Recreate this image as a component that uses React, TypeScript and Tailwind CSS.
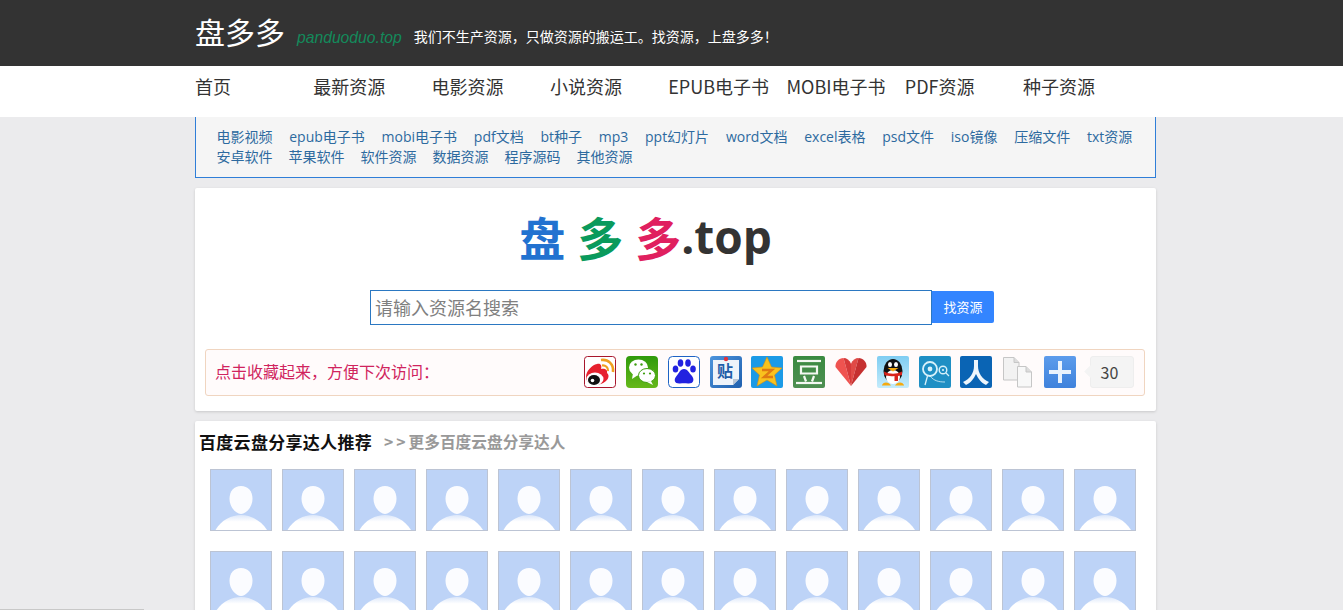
import React from "react";

const font = { fontFamily: '"Noto Sans CJK SC", sans-serif' };
const tagFont = { fontFamily: '"Open Sans", "Noto Sans CJK SC", sans-serif' };

const navItems = ["首页", "最新资源", "电影资源", "小说资源", "EPUB电子书", "MOBI电子书", "PDF资源", "种子资源"];

const tagRows = [
  {
    gap: "gap-[16.750px]",
    tags: ["电影视频", "epub电子书", "mobi电子书", "pdf文档", "bt种子", "mp3", "ppt幻灯片", "word文档", "excel表格", "psd文件", "iso镜像", "压缩文件", "txt资源"],
  },
  {
    gap: "gap-[16px]",
    tags: ["安卓软件", "苹果软件", "软件资源", "数据资源", "程序源码", "其他资源"],
  },
];

function Avatar() {
  return (
    <svg width="62" height="62" viewBox="0 0 60 60" className="block border border-[#bcc4d4] bg-[#bdd3f7]">
      <defs>
        <linearGradient id="shoulder" x1="0" y1="0" x2="0" y2="1">
          <stop offset="0" stopColor="#dce7fa" />
          <stop offset="0.45" stopColor="#ffffff" />
        </linearGradient>
      </defs>
      <path d="M30 16C37 16 41.500 21 41.500 29C41.500 37 35 44 30 44C25 44 18.500 37 18.500 29C18.500 21 23 16 30 16Z" fill="#fbfcff" />
      <path d="M4.500 60C10 50 21 45 30 45C39 45 50 50 56 60Z" fill="url(#shoulder)" />
    </svg>
  );
}

function ShareIcon({ children }: { children: React.ReactNode }) {
  return (
    <svg width="32" height="32" viewBox="0 0 32 32" className="block">
      {children}
    </svg>
  );
}

const shareIcons = [
  // weibo
  <ShareIcon key="weibo">
    <rect x="0.500" y="0.500" width="31" height="31" rx="3" fill="#fff" stroke="#a8162c" />
    <path d="M2 21C2 15 8 9 13 8C17 7 18 10 17 13C21 12 24 14 23 17C26 19 25 25 17 28C9 30 2 27 2 21Z" fill="#e6212e" />
    <ellipse cx="11" cy="23" rx="8.500" ry="6.500" fill="#fff" />
    <ellipse cx="10" cy="24" rx="6" ry="5" fill="#111" />
    <circle cx="8.500" cy="24.500" r="1.800" fill="#fff" />
    <path d="M17 4C24 3 30 8 29 16" fill="none" stroke="#f0a020" strokeWidth="2.600" />
    <path d="M18 9.500C21.500 9 24.500 11.500 24 15" fill="none" stroke="#f0a020" strokeWidth="2.200" />
  </ShareIcon>,
  // wechat
  <ShareIcon key="wechat">
    <defs>
      <linearGradient id="wx" x1="0" y1="0" x2="0" y2="1">
        <stop offset="0" stopColor="#2f9a0a" />
        <stop offset="1" stopColor="#66b81a" />
      </linearGradient>
    </defs>
    <rect width="32" height="32" rx="4" fill="url(#wx)" />
    <ellipse cx="12.500" cy="11.500" rx="9.500" ry="8" fill="#fff" />
    <path d="M7 17L6 23L12 19Z" fill="#fff" />
    <ellipse cx="21" cy="19.500" rx="8.500" ry="7" fill="#fff" stroke="#3f9f10" />
    <path d="M25 25L27 29L21 26Z" fill="#fff" />
    <circle cx="9.500" cy="8.500" r="1.200" fill="#3f9f10" />
    <circle cx="15.500" cy="8.500" r="1.200" fill="#3f9f10" />
    <circle cx="18" cy="17.500" r="1.100" fill="#3f9f10" />
    <circle cx="24" cy="17.500" r="1.100" fill="#3f9f10" />
  </ShareIcon>,
  // baidu
  <ShareIcon key="baidu">
    <rect x="0.500" y="0.500" width="31" height="31" rx="4" fill="#fff" stroke="#1e63c4" />
    <g fill="#2222e0">
      <ellipse cx="7.500" cy="13" rx="2.800" ry="3.600" />
      <ellipse cx="12.500" cy="7" rx="2.800" ry="3.800" />
      <ellipse cx="20" cy="7" rx="2.800" ry="3.800" />
      <ellipse cx="25" cy="13" rx="2.800" ry="3.600" />
      <path d="M16 13C20 13 21 17 24 20C27 24 25 28 20 27.500C17 27 15 27 12 27.500C7 28 5 24 8.500 20C11 17.500 12 13 16 13Z" />
    </g>
  </ShareIcon>,
  // tieba
  <ShareIcon key="tieba">
    <defs>
      <linearGradient id="tb" x1="0" y1="0" x2="1" y2="1">
        <stop offset="0" stopColor="#4d94dc" />
        <stop offset="1" stopColor="#1f5fae" />
      </linearGradient>
    </defs>
    <rect width="32" height="32" rx="3" fill="url(#tb)" />
    <path d="M3 4H29V23L23 29H3Z" fill="#eef3fa" />
    <path d="M29 23L23 29V23Z" fill="#b8c4d4" />
    <circle cx="16" cy="3" r="2.200" fill="#e0333c" />
    <text x="15" y="21" textAnchor="middle" fontSize="16" fontWeight="700" fill="#1f5da8" style={font}>贴</text>
  </ShareIcon>,
  // qzone
  <ShareIcon key="qzone">
    <rect width="32" height="32" rx="2" fill="#1c9ae6" />
    <path d="M16 1L20.500 11L31 12L23.500 19L26 30L16 24L6 30L8.500 19L1 12L11.500 11Z" fill="#f9c21e" stroke="#d98f12" strokeWidth="0.600" />
    <path d="M11 14H21L13 21H22" fill="none" stroke="#e07a12" strokeWidth="2.400" />
  </ShareIcon>,
  // douban
  <ShareIcon key="douban">
    <defs>
      <linearGradient id="db" x1="0" y1="0" x2="0" y2="1">
        <stop offset="0" stopColor="#3a8a40" />
        <stop offset="1" stopColor="#4f8f52" />
      </linearGradient>
    </defs>
    <rect width="32" height="32" rx="2" fill="url(#db)" />
    <g stroke="#f4f8f2" strokeWidth="2.200" fill="none">
      <path d="M4 5H28" />
      <path d="M8 10.500H24V17.500H8Z" />
      <path d="M11 20L13 25.500M21 20L19 25.500" />
      <path d="M3 27H29" />
    </g>
  </ShareIcon>,
  // heart
  <ShareIcon key="heart">
    <path d="M16 30L0.500 11C0 6 4 2 8.500 2Z" fill="#ef5350" />
    <path d="M8.500 2C11.500 2 14.500 4 16 7.500V30Z" fill="#d63a3a" />
    <path d="M23.500 2C20.500 2 17.500 4 16 7.500V30Z" fill="#e04a46" />
    <path d="M16 30L31.500 11C32 6 28 2 23.500 2Z" fill="#c53030" />
  </ShareIcon>,
  // qq
  <ShareIcon key="qq">
    <defs>
      <linearGradient id="qqbg" x1="0" y1="0" x2="0" y2="1">
        <stop offset="0" stopColor="#7fcdf2" />
        <stop offset="1" stopColor="#c4ebfb" />
      </linearGradient>
    </defs>
    <rect width="32" height="32" rx="2" fill="url(#qqbg)" />
    <ellipse cx="16" cy="15" rx="9.500" ry="12" fill="#111" />
    <ellipse cx="16" cy="21" rx="7" ry="7" fill="#fff" />
    <ellipse cx="13" cy="8.500" rx="2" ry="2.600" fill="#fff" />
    <ellipse cx="19" cy="8.500" rx="2" ry="2.600" fill="#fff" />
    <path d="M10.500 12H21.500L16 15.500Z" fill="#f5a90e" />
    <path d="M7 15.500C13 18.500 19 18.500 25 15.500L25 19L21 20V25H17.500V20C14 20.500 10 20 7.500 19Z" fill="#d9231c" />
    <path d="M5 29C7 25 12 26 14 29.500H5ZM27 29C25 25 20 26 18 29.500H27Z" fill="#f5a90e" />
  </ShareIcon>,
  // tencent pengyou
  <ShareIcon key="tqq">
    <rect width="32" height="32" rx="2" fill="#1f8fc4" />
    <circle cx="11" cy="13" r="7" fill="none" stroke="#d8f1fa" strokeWidth="1.800" />
    <circle cx="11" cy="13" r="2.400" fill="#d8f1fa" />
    <circle cx="24" cy="14" r="3.800" fill="none" stroke="#d8f1fa" strokeWidth="1.400" />
    <circle cx="24" cy="14" r="1.100" fill="#d8f1fa" />
    <path d="M8.500 20L6 29M27 17L30 20" stroke="#d8f1fa" strokeWidth="1.300" />
    <path d="M11 20C15 25 20 26 26 26" fill="none" stroke="#d8f1fa" strokeWidth="0.800" />
  </ShareIcon>,
  // renren
  <ShareIcon key="renren">
    <rect width="32" height="32" rx="2" fill="#0a64b4" />
    <path d="M14 4H18V10C18 17 22 23 29 26L26 29C21 27 18 22 16 18C14 22 11 27 6 29L3 26C10 23 14 17 14 10Z" fill="#eef6fc" />
  </ShareIcon>,
  // copy
  <ShareIcon key="copy">
    <path d="M1.500 1.500H12L17 6.500V24H1.500Z" fill="#f2f2f2" stroke="#c6c6c6" />
    <path d="M12 1.500V6.500H17" fill="#dcdcdc" stroke="#c6c6c6" />
    <path d="M15.500 10.500H24L29.500 16V31H15.500Z" fill="#f8f8f8" stroke="#c6c6c6" />
    <path d="M24 10.500V16H29.500" fill="#dcdcdc" stroke="#c6c6c6" />
  </ShareIcon>,
  // more
  <ShareIcon key="more">
    <defs>
      <linearGradient id="mo" x1="0" y1="0" x2="0" y2="1">
        <stop offset="0" stopColor="#5c9cec" />
        <stop offset="1" stopColor="#3f82dc" />
      </linearGradient>
    </defs>
    <rect width="32" height="32" rx="2" fill="url(#mo)" />
    <path d="M14 5H18V14H27V18H18V27H14V18H5V14H14Z" fill="#eaf3fd" />
  </ShareIcon>,
];

export default function App() {
  return (
    <div className="relative h-[610px] overflow-hidden bg-[#ebebed]" style={font}>
      {/* Header */}
      <header className="h-[66px] bg-[#333333]">
        <div className="ml-[195px] flex h-full w-[961px] items-center">
          <span className="mb-[4px] text-[30px] leading-none text-white">盘多多</span>
          <span className="ml-[12px] mt-[9px] text-[15.700px] italic text-[#138a5b]" style={{ fontFamily: '"Liberation Sans", sans-serif' }}>panduoduo.top</span>
          <span className="ml-[12px] mt-[7px] text-[14px] text-white">我们不生产资源，只做资源的搬运工。找资源，上盘多多！</span>
        </div>
      </header>

      {/* Nav */}
      <nav className="h-[51px] bg-white">
        <ul className="ml-[195px] flex h-full w-[961px] items-center pb-[10px]">
          {navItems.map((item) => (
            <li key={item} className="w-[118.300px] whitespace-nowrap text-[18px] text-[#333333]">{item}</li>
          ))}
        </ul>
      </nav>

      <main className="ml-[195px] w-[961px]">
        {/* Tags */}
        <div className="h-[61px] border-x border-b border-[#2f7ed8] bg-[#f5f5f5] pl-[20.500px] pt-[10px] text-[14px] leading-[20px] text-[#2d6a9f]" style={tagFont}>
          {tagRows.map((row, i) => (
            <div key={i} className={`flex whitespace-nowrap ${row.gap}`}>
              {row.tags.map((tag) => (
                <a key={tag}>{tag}</a>
              ))}
            </div>
          ))}
        </div>

        {/* Search card */}
        <section className="mt-[10px] h-[223px] rounded-[2px] bg-white pl-[10px] pr-[11px] shadow-[0_1px_3px_rgba(0,0,0,0.15)]">
          <div className="flex h-[102px] items-center justify-center pb-[6px] pr-[59px] text-[46px] font-bold leading-none text-[#333333]">
            <span className="text-[#2272d0]">盘</span>
            <span className="ml-[12px] text-[#0a9a5c]">多</span>
            <span className="ml-[12px] text-[#e0205f]">多</span>
            <span style={{ fontFamily: '"Open Sans", sans-serif' }}>.top</span>
          </div>
          <div className="flex items-start pl-[165px]">
            <div className="flex h-[35px] w-[562px] items-center border border-[#2b78c2] pl-[4px] text-[18px] text-[#808080]">请输入资源名搜索</div>
            <button className="mt-[1px] h-[32px] w-[62px] rounded-r-[2px] bg-[#3385ff] text-[13px] text-white">找资源</button>
          </div>
          <div className="mt-[24px] flex h-[47px] items-center rounded-[3px] border border-[#f0d5c0] bg-[#fffbfb] pl-[9px]">
            <span className="mb-[4px] text-[16px] text-[#d0245e]">点击收藏起来，方便下次访问：</span>
            <div className="mb-[1px] ml-[auto] flex items-center gap-[9.800px]">
              {shareIcons.map((icon, i) => (
                <span key={i} className="block w-[32px]">{icon}</span>
              ))}
            </div>
            <div className="relative mb-[1px] ml-[14px] mr-[10px] flex h-[32px] w-[44px] items-center justify-center rounded-[3px] border border-[#eeeeee] bg-[#f4f4f4] pr-[5px] text-[16px] text-[#444444]">
              30
              <span className="absolute left-[-5px] top-[10px] h-[9px] w-[9px] rotate-45 bg-[#f4f4f4]" />
            </div>
          </div>
        </section>

        {/* Recommended */}
        <section className="mt-[10px] h-[300px] rounded-[2px] bg-white shadow-[0_1px_3px_rgba(0,0,0,0.15)]">
          <div className="flex h-[48px] items-center pb-[6px] pl-[4px]">
            <h2 className="text-[17px] font-bold tracking-[0.3px] text-[#111111]">百度云盘分享达人推荐</h2>
            <a className="ml-[12px] text-[15.700px] font-bold text-[#999999]">
              <span className="tracking-[3px]">&gt;&gt;</span>更多百度云盘分享达人
            </a>
          </div>
          <div className="grid grid-cols-[repeat(13,62px)] gap-x-[10px] gap-y-[20px] pl-[15px]">
            {Array.from({ length: 26 }).map((_, i) => (
              <Avatar key={i} />
            ))}
          </div>
        </section>
      </main>

      {/* window scrollbar sliver at the bottom edge */}
      <div className="absolute bottom-0 left-0 h-[1px] w-[144px] bg-[#c8c8c8]" />
    </div>
  );
}
